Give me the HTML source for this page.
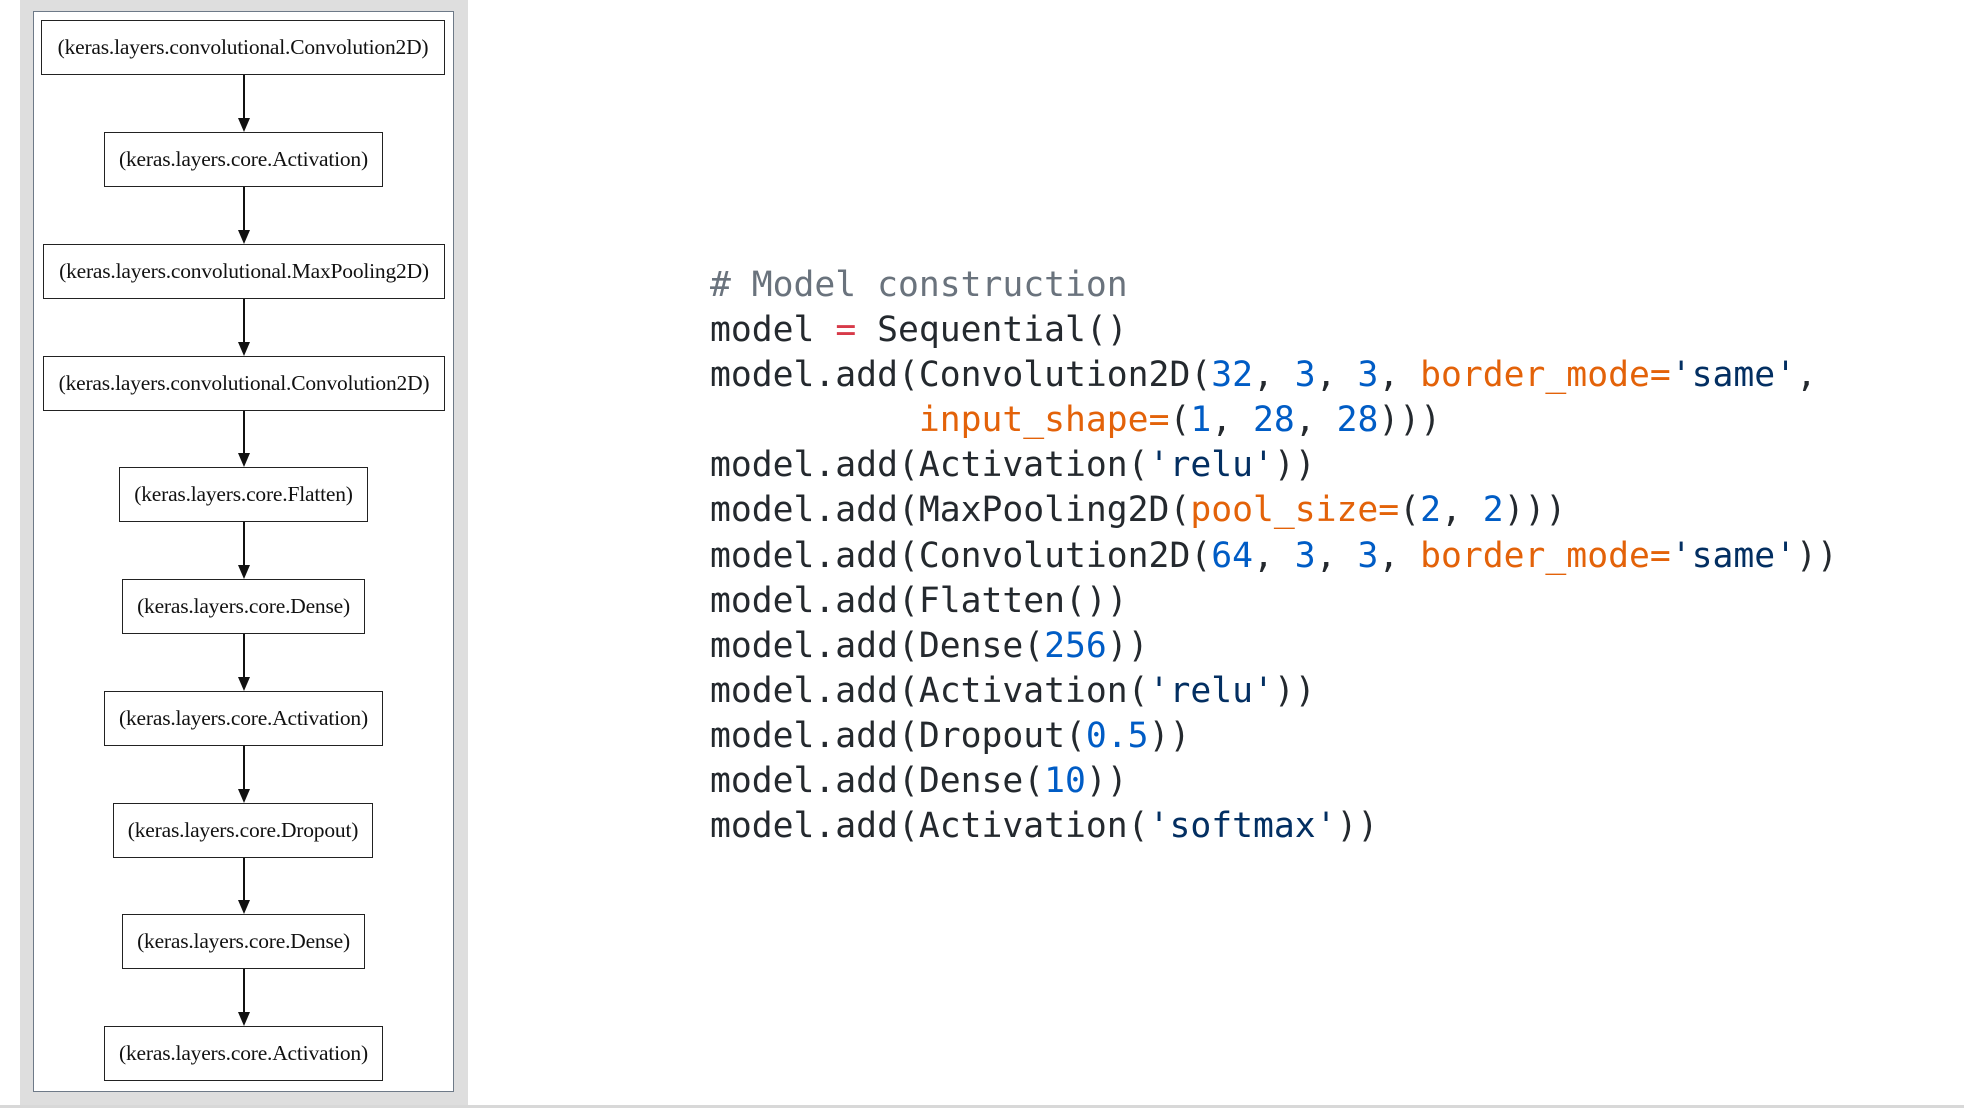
<!DOCTYPE html>
<html><head><meta charset="utf-8"><style>
html,body{margin:0;padding:0;width:1964px;height:1108px;background:#fff;overflow:hidden;position:relative}
.panel{position:absolute;left:20px;top:0;width:448px;height:1105px;background:#dedede}
.strip{position:absolute;left:0;top:1105px;width:1964px;height:3px;background:#d8d8d8}
.inner{position:absolute;left:33px;top:11px;width:419px;height:1079px;background:#fff;border:1px solid #6e7a88}
.box{position:absolute;border:1.5px solid #222;background:#fff;font-family:"Liberation Serif",serif;font-size:21.5px;color:#111;display:flex;align-items:center;justify-content:center;box-sizing:border-box;height:55px;white-space:nowrap;letter-spacing:-0.2px}
.ln{position:absolute;left:243px;width:1.5px;background:#111}
.ar{position:absolute;left:238px;width:0;height:0;border-left:6px solid transparent;border-right:6px solid transparent;border-top:14px solid #111}
pre{position:absolute;left:710px;top:263px;margin:0;font-family:"DejaVu Sans Mono","Liberation Mono",monospace;font-size:34.7px;line-height:45.1px;color:#24292e}
.c{color:#6a737d}.n{color:#005cc5}.o{color:#e36209}.s{color:#032f62}.e{color:#d73a49}
</style></head><body>
<div class="panel"></div><div class="strip"></div>
<div class="inner"></div>
<div class="box" style="left:41px;top:20px;width:404px">(keras.layers.convolutional.Convolution2D)</div>
<div class="box" style="left:104px;top:132px;width:279px">(keras.layers.core.Activation)</div>
<div class="box" style="left:43px;top:244px;width:402px">(keras.layers.convolutional.MaxPooling2D)</div>
<div class="box" style="left:43px;top:356px;width:402px">(keras.layers.convolutional.Convolution2D)</div>
<div class="box" style="left:119px;top:467px;width:249px">(keras.layers.core.Flatten)</div>
<div class="box" style="left:122px;top:579px;width:243px">(keras.layers.core.Dense)</div>
<div class="box" style="left:104px;top:691px;width:279px">(keras.layers.core.Activation)</div>
<div class="box" style="left:113px;top:803px;width:260px">(keras.layers.core.Dropout)</div>
<div class="box" style="left:122px;top:914px;width:243px">(keras.layers.core.Dense)</div>
<div class="box" style="left:104px;top:1026px;width:279px">(keras.layers.core.Activation)</div>

<div class="ln" style="top:75px;height:45px"></div><div class="ar" style="top:118px"></div>
<div class="ln" style="top:187px;height:45px"></div><div class="ar" style="top:230px"></div>
<div class="ln" style="top:299px;height:45px"></div><div class="ar" style="top:342px"></div>
<div class="ln" style="top:411px;height:44px"></div><div class="ar" style="top:453px"></div>
<div class="ln" style="top:522px;height:45px"></div><div class="ar" style="top:565px"></div>
<div class="ln" style="top:634px;height:45px"></div><div class="ar" style="top:677px"></div>
<div class="ln" style="top:746px;height:45px"></div><div class="ar" style="top:789px"></div>
<div class="ln" style="top:858px;height:44px"></div><div class="ar" style="top:900px"></div>
<div class="ln" style="top:969px;height:45px"></div><div class="ar" style="top:1012px"></div>

<pre><span class="c"># Model construction</span>
model <span class="e">=</span> Sequential()
model.add(Convolution2D(<span class="n">32</span>, <span class="n">3</span>, <span class="n">3</span>, <span class="o">border_mode=</span><span class="s">'same'</span>,
          <span class="o">input_shape=</span>(<span class="n">1</span>, <span class="n">28</span>, <span class="n">28</span>)))
model.add(Activation(<span class="s">'relu'</span>))
model.add(MaxPooling2D(<span class="o">pool_size=</span>(<span class="n">2</span>, <span class="n">2</span>)))
model.add(Convolution2D(<span class="n">64</span>, <span class="n">3</span>, <span class="n">3</span>, <span class="o">border_mode=</span><span class="s">'same'</span>))
model.add(Flatten())
model.add(Dense(<span class="n">256</span>))
model.add(Activation(<span class="s">'relu'</span>))
model.add(Dropout(<span class="n">0.5</span>))
model.add(Dense(<span class="n">10</span>))
model.add(Activation(<span class="s">'softmax'</span>))</pre>
</body></html>
